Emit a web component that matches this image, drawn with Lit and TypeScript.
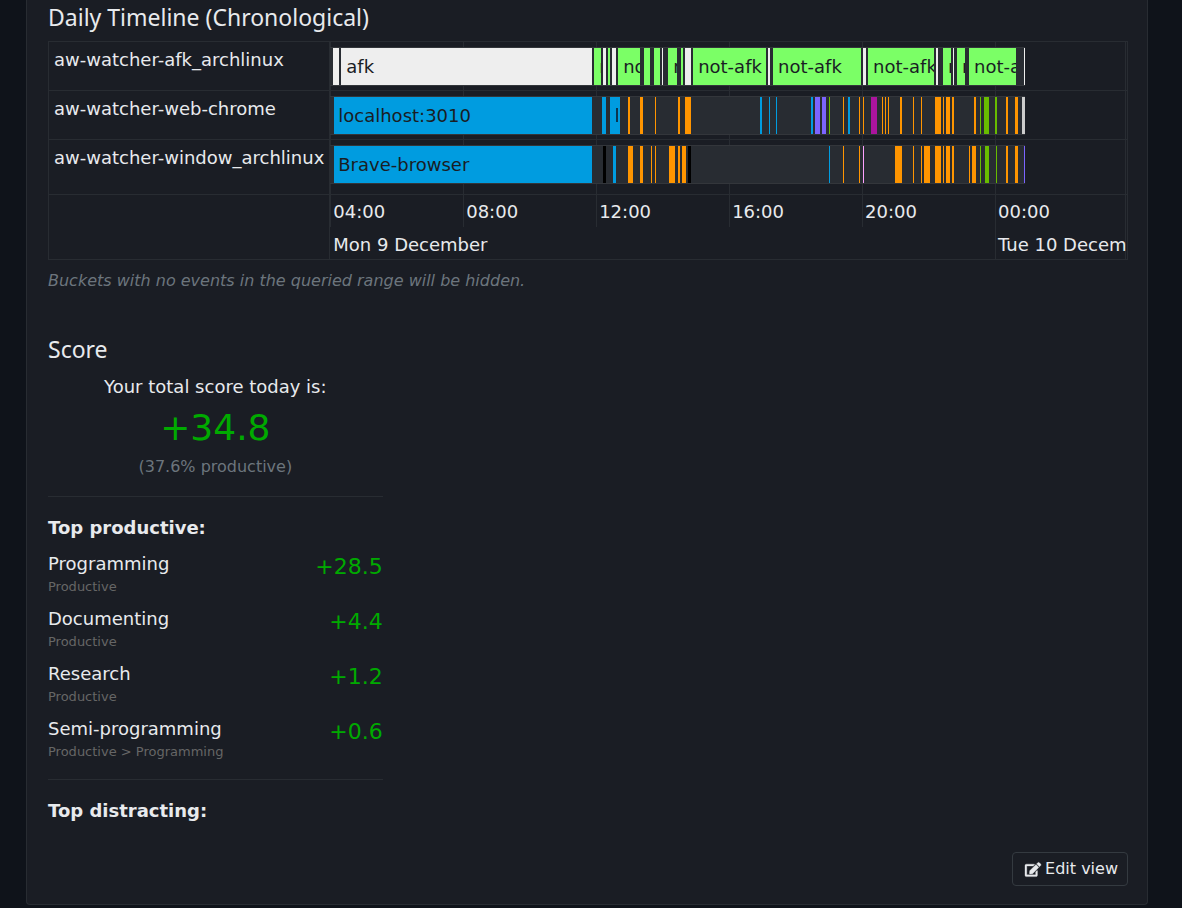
import { LitElement, html, css } from "lit";
import { customElement, property } from "lit/decorators.js";
import { styleMap } from "lit/directives/style-map.js";

type Span = [start: number, end: number, kind: string, label?: string];

interface Bucket {
  id: string;
  events: Span[];
}

// One unit of the axis is 1.8 minutes; the queried range spans 797 units.
const RANGE = 797;
const HOURS = ["04:00", "08:00", "12:00", "16:00", "20:00", "00:00"];
const TICK_STEP = 133;

const pct = (n: number) => `${(n / RANGE) * 100}%`;

const BUCKETS: Bucket[] = [
  {
    id: "aw-watcher-afk_archlinux",
    events: [
      [3, 9, "afk"], [11, 262, "afk", "afk"], [264, 271, "active", "not-afk"],
      [273, 276, "afk"], [278, 280, "active"], [282, 286, "afk"],
      [288, 310, "active", "not-afk"], [314, 320, "active"], [324, 330, "active"],
      [332, 333, "afk"], [338, 347, "active", "not-afk"], [351, 353, "active"],
      [355, 361, "afk"], [363, 436, "active", "not-afk"], [438, 440, "afk"],
      [443, 531, "active", "not-afk"], [533, 536, "afk"],
      [538, 604, "active", "not-afk"], [606, 608, "afk"],
      [613, 621, "active", "not-afk"], [623, 624, "afk"],
      [627, 635, "active", "not-afk"], [639, 686, "active", "not-afk"],
      [694, 695, "afk"],
    ],
  },
  {
    id: "aw-watcher-web-chrome",
    events: [
      [4, 262, "blue", "localhost:3010"], [272, 276, "blue"],
      [280, 290, "blue"], [286, 288, "navy"], [298, 300, "orange"], [310, 313, "orange"],
      [325, 326, "orange"], [348, 350, "orange"], [355, 361, "orange"],
      [430, 432, "blue"], [439, 440, "blue"], [446, 447, "blue"],
      [481, 483, "blue"], [485, 490, "purple"], [492, 496, "purple"],
      [499, 500, "green"], [513, 514, "orange"], [518, 520, "blue"],
      [529, 530, "orange"], [533, 534, "orange"], [541, 547, "magenta"],
      [552, 553, "orange"], [555, 556, "orange"], [558, 559, "orange"],
      [570, 572, "orange"], [583, 584, "orange"], [591, 592, "orange"],
      [605, 611, "orange"], [613, 614, "orange"], [616, 620, "orange"],
      [622, 624, "orange"], [644, 646, "orange"], [650, 651, "green"],
      [654, 659, "green"], [665, 667, "green"], [676, 678, "orange"],
      [685, 688, "orange"], [692, 695, "grey"],
    ],
  },
  {
    id: "aw-watcher-window_archlinux",
    events: [
      [4, 262, "blue", "Brave-browser"], [273, 276, "black"], [283, 286, "blue"],
      [298, 303, "orange"], [310, 313, "orange"], [321, 322, "orange"],
      [325, 326, "orange"], [339, 345, "orange"], [348, 350, "orange"],
      [352, 356, "orange"], [358, 361, "black"], [499, 500, "blue"],
      [513, 514, "orange"], [529, 530, "orange"], [533, 534, "pink"],
      [565, 572, "orange"], [583, 584, "orange"], [591, 592, "orange"],
      [594, 600, "orange"], [605, 611, "orange"], [613, 614, "orange"],
      [616, 620, "orange"], [622, 624, "orange"], [639, 640, "orange"],
      [642, 646, "orange"], [650, 651, "green"], [655, 659, "green"],
      [666, 667, "green"], [676, 678, "orange"], [685, 688, "orange"],
      [694, 695, "purple"],
    ],
  },
];

@customElement("day-timeline")
export class DayTimeline extends LitElement {
  @property({ attribute: false }) buckets: Bucket[] = [];

  static styles = css`
    :host {
      display: block;
      --line: #282c32;
    }
    .chart {
      display: grid;
      grid-template-columns: max-content minmax(0, 1fr);
      border: 1px solid var(--line);
      font-size: 18px;
      line-height: 27px;
    }
    .labels {
      border-right: 1px solid var(--line);
    }
    .label {
      height: 44px;
      padding: 4px 5px 0;
      border-bottom: 1px solid var(--line);
    }
    .label:last-child {
      height: 50px;
    }
    .plot {
      position: relative;
      overflow: hidden;
    }
    .grid {
      position: absolute;
      top: 0;
      bottom: 32px;
      width: 1px;
      background: var(--line);
    }
    .grid.full {
      bottom: 0;
    }
    .row {
      position: relative;
      padding: 5px 0 4px;
      border-bottom: 1px solid var(--line);
    }
    .row.last {
      padding-bottom: 10px;
    }
    .strip {
      height: 37px;
      border: solid #33363b;
      border-width: 1px 0;
      background: #282c32;
      position: relative;
    }
    /* Spans the whole range, so that event offsets share the axis scale. */
    .lane {
      position: absolute;
      inset: 6px 0 auto;
      height: 37px;
    }
    .event {
      position: absolute;
      top: 0;
      bottom: 0;
      overflow: hidden;
      white-space: nowrap;
      line-height: 37px;
      color: #1a1d24;
    }
    .text {
      padding-left: 5px;
    }
    .blue .text {
      padding-left: 4px;
    }
    .afk { background: #eeeeee; }
    .active { background: #7bff66; }
    .blue { background: #009ce0; }
    .orange { background: #ff9500; }
    .purple { background: #7b64ff; }
    .green { background: #68bc00; }
    .magenta { background: #ab149e; }
    .pink { background: #fda1ff; }
    .grey { background: #cccccc; }
    .black { background: #000000; }
    .navy { background: #0b3550; top: 11px; bottom: 12px; }
    .axis {
      position: relative;
      height: 64px;
      line-height: 33px;
    }
    .tick {
      position: absolute;
      top: 0;
      padding-left: 3px;
      white-space: nowrap;
    }
    .day {
      top: 33px;
    }
  `;

  private renderEvent([start, end, kind, label]: Span) {
    const place = styleMap({ left: pct(start), width: pct(end - start) });
    return html`<div class="event ${kind}" style=${place}>${label
      ? html`<span class="text">${label}</span>`
      : null}</div>`;
  }

  render() {
    const last = this.buckets.length - 1;
    return html`
      <div class="chart">
        <div class="labels">
          ${this.buckets.map((b) => html`<div class="label">${b.id}</div>`)}
        </div>
        <div class="plot">
          ${HOURS.map((_, i) => html`<div
            class="grid ${i === 5 ? "full" : ""}"
            style=${styleMap({ left: pct(i * TICK_STEP) })}></div>`)}
          <div class="grid full" style=${styleMap({ left: pct(795) })}></div>
          ${this.buckets.map((b, i) => html`
            <div class="row ${i === last ? "last" : ""}">
              <div class="strip" style=${styleMap({ marginRight: pct(RANGE - 695) })}></div>
              <div class="lane">${b.events.map((e) => this.renderEvent(e))}</div>
            </div>`)}
          <div class="axis">
            ${HOURS.map((h, i) => html`<span
              class="tick"
              style=${styleMap({ left: pct(i * TICK_STEP) })}>${h}</span>`)}
            <span class="tick day" style=${styleMap({ left: pct(0) })}>Mon 9 December</span>
            <span class="tick day" style=${styleMap({ left: pct(5 * TICK_STEP) })}>Tue 10 December</span>
          </div>
        </div>
      </div>
    `;
  }
}

const PRODUCTIVE = [
  { name: "Programming", path: "Productive", score: "+28.5" },
  { name: "Documenting", path: "Productive", score: "+4.4" },
  { name: "Research", path: "Productive", score: "+1.2" },
  { name: "Semi-programming", path: "Productive > Programming", score: "+0.6" },
];

@customElement("app-root")
export class AppRoot extends LitElement {
  static styles = css`
    :host {
      display: block;
      min-height: 100vh;
      box-sizing: border-box;
      padding: 0 34px 2px 26px;
      background: #0f131a;
      color: #e8eaed;
      font-family: "DejaVu Sans", Verdana, sans-serif;
      font-size: 18px;
      line-height: 27px;
    }
    .card {
      padding: 4px 19px 18px 21px;
      border: 1px solid #282c32;
      border-top: 0;
      border-radius: 0 0 4px 4px;
      background: #1a1d24;
    }
    h2 {
      margin: 0 0 11px;
      font-family: "Noto Sans", sans-serif;
      font-size: 23px;
      font-weight: 400;
      line-height: 26px;
    }
    .note {
      margin: 9px 0 43px;
      font-size: 16px;
      font-style: italic;
      line-height: 24px;
      color: #6c757d;
    }
    .views {
      display: grid;
      grid-template-columns: repeat(3, minmax(0, 1fr));
      gap: 38px;
    }
    .total {
      text-align: center;
    }
    .value {
      font-size: 36px;
      line-height: 55px;
      color: #00aa00;
    }
    .share {
      font-size: 16px;
      line-height: 24px;
      color: #6c757d;
    }
    hr {
      margin: 17px 0;
      border: 0;
      border-top: 1px solid #282c32;
    }
    h3 {
      margin: 0 0 9px;
      font-size: 18px;
      font-weight: 700;
      line-height: 27px;
    }
    ul {
      display: grid;
      gap: 8px;
      margin: 0;
      padding: 0;
      list-style: none;
    }
    li {
      display: flex;
      justify-content: space-between;
    }
    .path {
      font-size: 13px;
      line-height: 20px;
      color: #666666;
    }
    .score {
      font-size: 22px;
      line-height: 34px;
      color: #00aa00;
    }
    .actions {
      display: flex;
      justify-content: flex-end;
      margin-top: 19px;
    }
    .edit {
      display: flex;
      align-items: center;
      gap: 4px;
      padding: 4px 9px 4px 12px;
      border: 1px solid #343a40;
      border-radius: 4px;
      background: transparent;
      color: inherit;
      font-family: inherit;
      font-size: 16px;
      line-height: 24px;
      cursor: pointer;
    }
    .icon {
      width: 16px;
      height: 15px;
      fill: currentColor;
      stroke: currentColor;
      stroke-width: 12px;
      overflow: visible;
    }
  `;

  render() {
    return html`
      <main class="card">
        <h2>Daily Timeline (Chronological)</h2>
        <day-timeline .buckets=${BUCKETS}></day-timeline>
        <p class="note">Buckets with no events in the queried range will be hidden.</p>
        <div class="views">
          <section>
            <h2>Score</h2>
            <div class="total">
              <div>Your total score today is:</div>
              <div class="value">+34.8</div>
              <div class="share">(37.6% productive)</div>
            </div>
            <hr />
            <h3>Top productive:</h3>
            <ul>
              ${PRODUCTIVE.map((c) => html`
                <li>
                  <div>
                    <div>${c.name}</div>
                    <div class="path">${c.path}</div>
                  </div>
                  <div class="score">${c.score}</div>
                </li>`)}
            </ul>
            <hr />
            <h3>Top distracting:</h3>
          </section>
        </div>
        <div class="actions">
          <button class="edit" type="button">
            <svg class="icon" viewBox="0 0 576 512" aria-hidden="true">
              <path d="M402.6 83.2l90.2 90.2c3.8 3.8 3.8 10 0 13.8L274.4 405.6l-92.8 10.3c-12.4 1.4-22.9-9.1-21.5-21.5l10.3-92.8L388.8 83.2c3.8-3.8 10-3.8 13.8 0zm162-22.9l-48.8-48.8c-15.2-15.2-39.9-15.2-55.2 0l-35.4 35.4c-3.8 3.8-3.8 10 0 13.8l90.2 90.2c3.8 3.8 10 3.8 13.8 0l35.4-35.4c15.2-15.3 15.2-40 0-55.2zM384 346.2V448H64V128h229.8c3.2 0 6.2-1.3 8.5-3.5l40-40c7.6-7.6 2.2-20.5-8.5-20.5H48C21.5 64 0 85.5 0 112v352c0 26.5 21.5 48 48 48h352c26.5 0 48-21.5 48-48V306.2c0-10.7-12.9-16-20.5-8.5l-40 40c-2.2 2.3-3.5 5.3-3.5 8.5z"/>
            </svg>
            <span>Edit view</span>
          </button>
        </div>
      </main>
    `;
  }
}
